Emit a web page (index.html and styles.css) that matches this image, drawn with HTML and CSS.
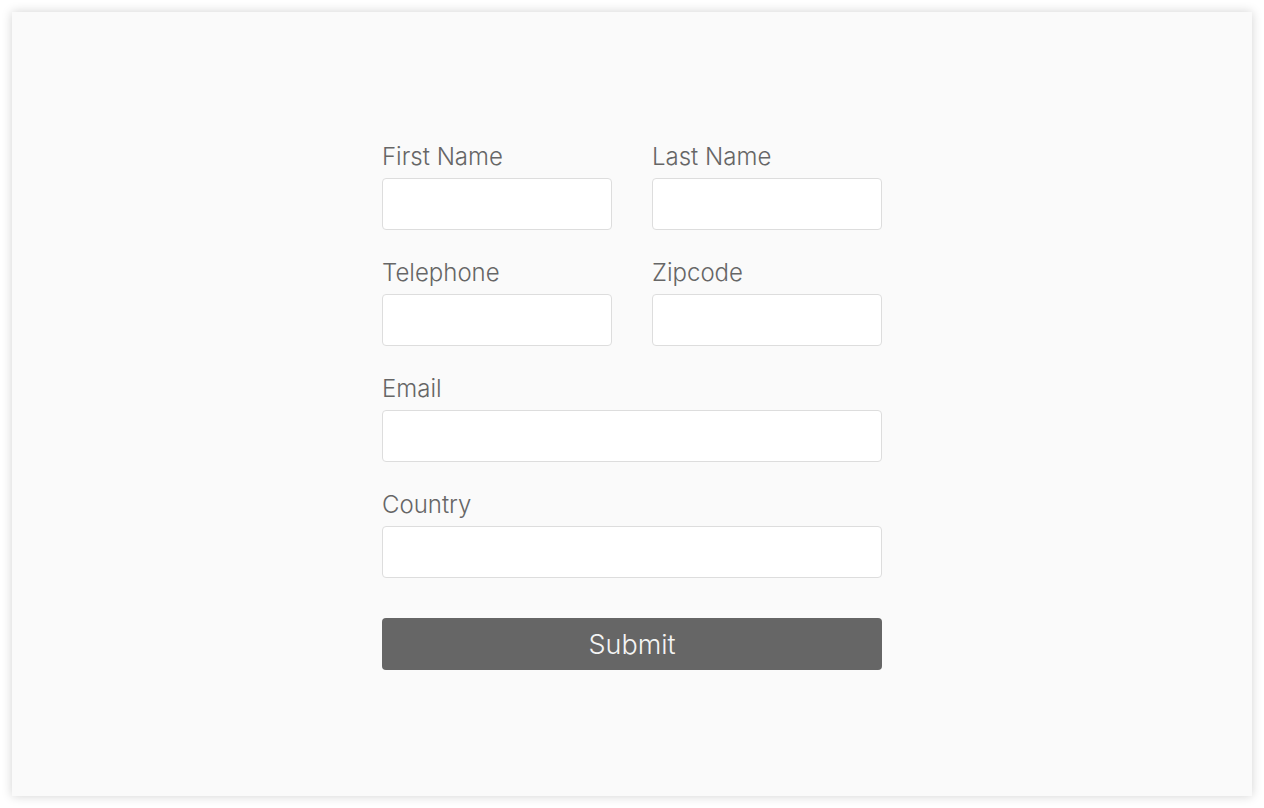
FILE: index.html
```html
<!DOCTYPE html>
<html>
<head>
<meta charset="utf-8">
<link rel="stylesheet" href="styles.css">
</head>
<body>
<div class="card">
  <form class="form">
    <div class="row two">
      <div class="field">
        <label>First Name</label>
        <input type="text">
      </div>
      <div class="field">
        <label>Last Name</label>
        <input type="text">
      </div>
    </div>
    <div class="row two">
      <div class="field">
        <label>Telephone</label>
        <input type="text">
      </div>
      <div class="field">
        <label>Zipcode</label>
        <input type="text">
      </div>
    </div>
    <div class="row">
      <div class="field">
        <label>Email</label>
        <input type="text">
      </div>
    </div>
    <div class="row">
      <div class="field">
        <label>Country</label>
        <input type="text">
      </div>
    </div>
    <button type="button" class="submit">Submit</button>
  </form>
</div>
</body>
</html>
```
FILE: styles.css
```css
html, body {
  margin: 0;
  padding: 0;
  background: #ffffff;
}
body {
  padding: 12px;
  font-family: "Inter", "Noto Sans", sans-serif;
}
.card {
  box-sizing: border-box;
  width: 1240px;
  height: 784px;
  background: #fafafa;
  box-shadow: 0 0 10px rgba(0, 0, 0, 0.18);
  display: flex;
  justify-content: center;
  align-items: center;
}
.form {
  width: 500px;
  display: flex;
  flex-direction: column;
  gap: 20px;
  margin-bottom: 4px;
}
.row {
  display: grid;
  grid-template-columns: 1fr;
  column-gap: 40px;
}
.row.two {
  grid-template-columns: 1fr 1fr;
}
.field {
  display: flex;
  flex-direction: column;
}
.field label {
  font-size: 24px;
  font-weight: 300;
  color: #666666;
  line-height: 32px;
  height: 32px;
  padding-top: 7px;
  margin-bottom: 5px;
}
.field input {
  box-sizing: border-box;
  height: 52px;
  width: 100%;
  border: 1px solid #dddddd;
  border-radius: 4px;
  background: #ffffff;
  margin: 0;
  padding: 0 12px;
  outline: none;
}
.submit {
  margin-top: 20px;
  height: 52px;
  border: none;
  border-radius: 4px;
  background: #666666;
  color: #f4f4f4;
  font-family: "Inter", "Noto Sans", sans-serif;
  font-size: 27px;
  font-weight: 300;
  padding: 0;
}
```
